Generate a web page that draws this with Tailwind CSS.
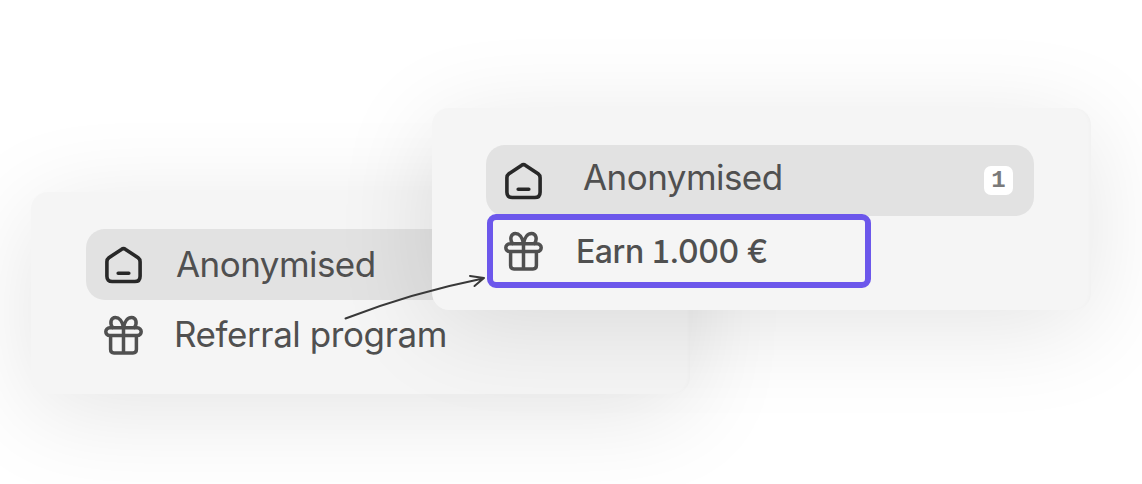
<!DOCTYPE html>
<html lang="en">
<head>
  <meta charset="UTF-8">
  <meta name="viewport" content="width=device-width, initial-scale=1.0">
  <title>Referral program</title>
  <script src="https://cdn.jsdelivr.net/npm/@tailwindcss/browser@4"></script>
</head>
<body class="bg-white font-['Inter',sans-serif] text-[#505050]">
  <!-- Shared icons -->
  <svg class="hidden">
    <symbol id="home" viewBox="0 0 40 40">
      <path d="M2.9 16.7Q2.9 14.2 4.9 12.7L17.4 4.4Q19.5 2.8 21.6 4.4L34.1 12.7Q36.1 14.2 36.1 16.7V31.2Q36.1 36.5 30.8 36.5H8.2Q2.9 36.5 2.9 31.2ZM14.2 28.3H24.8" fill="none" stroke="currentColor" stroke-width="3.6" stroke-linecap="round" stroke-linejoin="round"/>
    </symbol>
    <symbol id="gift" viewBox="0 0 40 40">
      <path d="M5.7 12.8H33.3A3.9 3.9 0 0 1 33.3 20.6H5.7A3.9 3.9 0 0 1 5.7 12.8ZM6.6 20.6V34.6Q6.6 38 10 38H29Q32.4 38 32.4 34.6V20.6M19.5 12.8V38M19.5 12.8C18.5 6 15 2.4 11.4 2.4C7.2 2.4 5.2 7.8 8.6 12.8M19.5 12.8C20.5 6 24 2.4 27.6 2.4C31.8 2.4 33.8 7.8 30.4 12.8" fill="none" stroke="currentColor" stroke-width="3.5" stroke-linecap="round" stroke-linejoin="round"/>
    </symbol>
  </svg>

  <main class="relative w-[1142px] h-[484px] overflow-hidden">
    <!-- Before -->
    <section class="absolute left-[31px] top-[192px] w-[659px] h-[202px] rounded-[17px] bg-[#f5f5f5] pl-[55px] pt-[37px] shadow-[0_17px_100px_rgba(0,0,0,0.11),inset_-3px_0_4px_-2px_rgba(0,0,0,0.025)]">
      <div class="flex items-center w-[548px] h-[71px] rounded-[19px] bg-[#e2e2e2] pl-[18px]">
        <svg class="size-10 text-[#282828]"><use href="#home"/></svg>
        <span class="ml-[32px] mb-[2px] text-[35px] tracking-[-0.55px] leading-[68px]">Anonymised</span>
      </div>
      <div class="flex items-center h-[70px] pl-[18px]">
        <svg class="size-10"><use href="#gift"/></svg>
        <span class="ml-[30px] mb-[2px] text-[35px] tracking-[-0.42px] leading-[68px]">Referral program</span>
      </div>
    </section>

    <!-- After -->
    <section class="absolute left-[432px] top-[108px] w-[659px] h-[202px] rounded-[17px] bg-[#f5f5f5] pl-[54px] pt-[37px] shadow-[0_17px_100px_rgba(0,0,0,0.11),inset_-3px_0_4px_-2px_rgba(0,0,0,0.025)]">
      <div class="flex items-center w-[548px] h-[71px] rounded-[19px] bg-[#e2e2e2] pl-[18px] pr-[21px]">
        <svg class="size-10 text-[#282828]"><use href="#home"/></svg>
        <span class="ml-[39px] mb-[7px] text-[35px] tracking-[-0.55px] leading-[64px]">Anonymised</span>
        <span class="ml-auto flex items-center justify-center size-[29px] rounded-[7px] bg-white font-['Liberation_Mono',monospace] font-bold text-[24px] leading-none text-[#7a7a7a]">1</span>
      </div>
      <div class="-mt-[2px] ml-[1px] flex items-center w-[384px] h-[74px] rounded-[9px] border-[6px] border-[#6c57eb] pl-[11px]">
        <svg class="size-10"><use href="#gift"/></svg>
        <span class="ml-[32px] mt-[2px] font-medium text-[32px] tracking-[-0.45px] whitespace-nowrap">Earn <span class="font-['Noto_Sans_CJK_SC',sans-serif] leading-none">1</span>.000 €</span>
      </div>
    </section>

    <!-- Arrow between the two cards -->
    <svg class="absolute left-[340px] top-[270px] w-[150px] h-[54px] text-[#383838]" viewBox="340 270 150 54" fill="none" stroke="currentColor" stroke-width="2" stroke-linecap="round" stroke-linejoin="round">
      <path d="M345.5 318.5Q411 293 483 278.5M470 276L484 278L474.5 286"/>
    </svg>
  </main>
</body>
</html>
